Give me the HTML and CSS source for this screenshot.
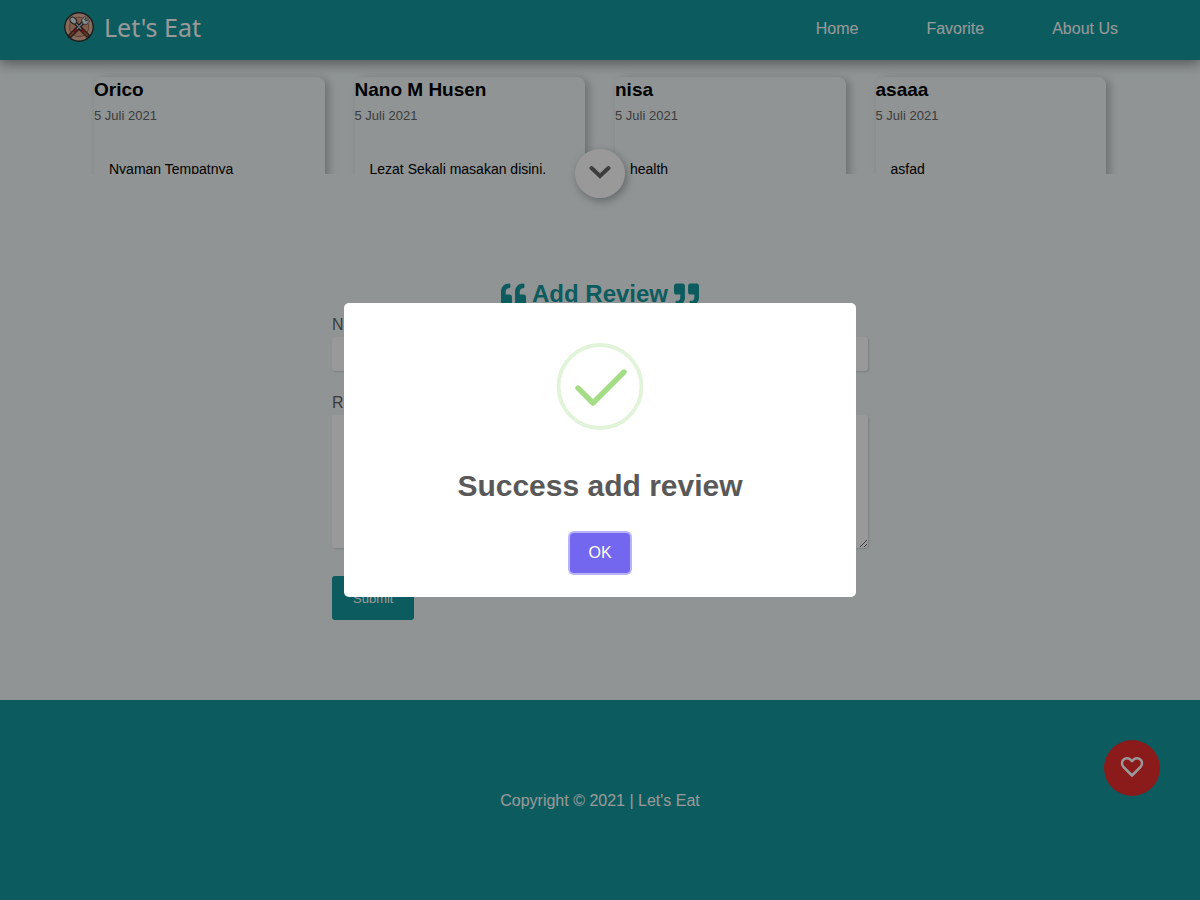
FILE: index.html
```html
<!DOCTYPE html>
<html lang="en">
<head>
<meta charset="utf-8">
<meta name="viewport" content="width=device-width, initial-scale=1">
<title>Let's Eat</title>
<link rel="stylesheet" href="styles.css">
</head>
<body>
<header class="header">
  <a class="brand" href="#">
    <svg class="brand-logo" viewBox="0 0 30 30" aria-hidden="true">
      <circle cx="15" cy="15" r="14.2" fill="#e2b49c" stroke="#33302f" stroke-width="1.4"/>
      <circle cx="15" cy="15" r="9.8" fill="#d99a7c" stroke="#9b6d5c" stroke-width="1"/>
      <g stroke-linecap="round" fill="none">
        <path d="M10 9.500 17 17M20 9.500 13 17" stroke="#33302f" stroke-width="3.800"/>
        <path d="M17 17 24 24M13 17 6 24" stroke="#33302f" stroke-width="4.400"/>
        <path d="M10 9.500 17 17M20 9.500 13 17" stroke="#aebdc4" stroke-width="1.200"/>
        <path d="M18 18 23.500 23.500M12 18 6.500 23.500" stroke="#a85a35" stroke-width="2.200"/>
        <path d="M18 18 19.500 19.500M12 18 10.500 19.500" stroke="#b51f2b" stroke-width="2.200"/>
      </g>
      <ellipse cx="9.300" cy="8.500" rx="2.800" ry="3.700" transform="rotate(-42 9.300 8.500)" fill="#dce8ed" stroke="#33302f"/>
      <path d="M17.500 8 20.500 4.500 22 5.500 20.500 8 23 5.500 24 6.500 21.500 9 24.500 8 25.500 9 22.500 12.500 19 12Z" fill="#dce8ed" stroke="#33302f" stroke-width=".7"/>
    </svg>
    <span>Let's Eat</span>
  </a>
  <nav class="nav">
    <a href="#">Home</a>
    <a href="#">Favorite</a>
    <a href="#">About Us</a>
  </nav>
</header>

<main class="main">
  <section class="reviews-wrap">
    <div class="reviews">
      <article class="review"><h3>Orico</h3><p class="date">5 Juli 2021</p><p class="comment">Nyaman Tempatnya</p></article>
      <article class="review"><h3>Nano M Husen</h3><p class="date">5 Juli 2021</p><p class="comment">Lezat Sekali masakan disini.</p></article>
      <article class="review"><h3>nisa</h3><p class="date">5 Juli 2021</p><p class="comment">health</p></article>
      <article class="review"><h3>asaaa</h3><p class="date">5 Juli 2021</p><p class="comment">asfad</p></article>
    </div>
    <button class="more" type="button" aria-label="Show more reviews">
      <svg viewBox="0 0 22 14" aria-hidden="true"><path d="M2.500 3 11 11 19.500 3" fill="none" stroke="#666" stroke-width="4" stroke-linecap="round" stroke-linejoin="miter"/></svg>
    </button>
  </section>

  <section class="add-review">
    <h2 class="form-title">
      <svg class="quote" viewBox="0 0 512 512" aria-hidden="true"><path d="M464 256h-80v-64c0-35.300 28.700-64 64-64h8c13.300 0 24-10.700 24-24V56c0-13.300-10.700-24-24-24h-8c-88.400 0-160 71.600-160 160v240c0 26.500 21.500 48 48 48h128c26.500 0 48-21.500 48-48V304c0-26.500-21.500-48-48-48zm-288 0H96v-64c0-35.300 28.700-64 64-64h8c13.300 0 24-10.700 24-24V56c0-13.300-10.700-24-24-24h-8C71.600 32 0 103.600 0 192v240c0 26.500 21.500 48 48 48h128c26.500 0 48-21.500 48-48V304c0-26.500-21.500-48-48-48z"/></svg>
      <span>Add Review</span>
      <svg class="quote" viewBox="0 0 512 512" aria-hidden="true"><path d="M464 32H336c-26.500 0-48 21.500-48 48v128c0 26.500 21.500 48 48 48h80v64c0 35.300-28.700 64-64 64h-8c-13.300 0-24 10.700-24 24v48c0 13.300 10.700 24 24 24h8c88.400 0 160-71.600 160-160V80c0-26.500-21.500-48-48-48zm-288 0H48C21.500 32 0 53.500 0 80v128c0 26.500 21.500 48 48 48h80v64c0 35.300-28.700 64-64 64h-8c-13.300 0-24 10.700-24 24v48c0 13.300 10.700 24 24 24h8c88.400 0 160-71.600 160-160V80c0-26.500-21.500-48-48-48z"/></svg>
    </h2>
    <form class="form">
      <label for="name">Name</label>
      <input id="name" type="text">
      <label for="review">Review</label>
      <textarea id="review"></textarea>
      <button class="submit" type="button">Submit</button>
    </form>
  </section>
</main>

<footer class="footer"><p>Copyright © 2021 | Let's Eat</p></footer>

<button class="like" type="button" aria-label="Like this restaurant">
  <svg viewBox="0 0 24 22" aria-hidden="true"><path d="M12 19.500 3.900 11.300C1.600 8.900 1.500 5.700 3.300 3.800 5.500 1.600 8.800 1.900 10.700 3.900L12 5.200 13.300 3.900C15.200 1.900 18.500 1.600 20.700 3.800 22.500 5.700 22.400 8.900 20.100 11.300Z" fill="none" stroke="#fff" stroke-width="2.600" stroke-linejoin="round"/></svg>
</button>

<div class="overlay">
  <div class="modal" role="dialog" aria-modal="true" aria-labelledby="modal-title">
    <svg class="success" viewBox="0 0 88 88" aria-hidden="true">
      <circle cx="44" cy="44.500" r="41.500" fill="none" stroke="#e1f3d8" stroke-width="3.800"/>
      <path d="M21.500 48 37 61 68 30.500" fill="none" stroke="none"/>
      <path d="M22 46 37 61 68 30" fill="none" stroke="#a5dc86" stroke-width="5.400" stroke-linecap="round" stroke-linejoin="round"/>
    </svg>
    <h2 id="modal-title">Success add review</h2>
    <button class="ok" type="button">OK</button>
  </div>
</div>
</body>
</html>
```
FILE: styles.css
```css
* {
  box-sizing: border-box;
}

body {
  margin: 0;
  min-height: 100vh;
  display: flex;
  flex-direction: column;
  background: #f0f7f7;
  color: #000;
  font: 16px/20px "Liberation Sans", Arial, sans-serif;
}

h2, h3, p {
  margin: 0;
}

button, input, textarea {
  font-family: inherit;
}

a {
  color: #fff;
  text-decoration: none;
}

.header {
  position: sticky;
  top: 0;
  z-index: 2;
  height: 60px;
  padding: 0 82px 6px 64px;
  display: flex;
  align-items: center;
  justify-content: space-between;
  background: #14999e;
  box-shadow: 0 4px 12px rgba(0, 0, 0, .4);
}

.brand {
  display: flex;
  align-items: center;
  gap: 10px;
  font: 25px/30px "Noto Sans", sans-serif;
}

.brand-logo {
  width: 30px;
  height: 30px;
}

.nav {
  padding-top: 4px;
  display: flex;
  gap: 68px;
}

.main {
  flex: 1;
}

.reviews-wrap {
  position: relative;
  width: calc(100% - 158px);
  margin: 0 auto;
}

.reviews {
  height: 114px;
  padding: 17px 15px 0;
  overflow: hidden;
  display: grid;
  grid-template-columns: repeat(4, 1fr);
  gap: 30px;
}

.review {
  height: 160px;
  border-radius: 8px;
  box-shadow: 4px 2px 8px rgba(0, 0, 0, .24);
  background: #f0f7f7;
}

.review h3 {
  padding-top: 1px;
  font-size: 19px;
  line-height: 24px;
}

.date {
  margin-top: 4px;
  color: #666;
  font-size: 13px;
}

.comment {
  padding: 33px 15px 0;
  font-size: 14px;
}

.more {
  position: absolute;
  left: 50%;
  bottom: -24px;
  width: 50px;
  height: 49px;
  margin-left: -25px;
  padding: 0 0 4px;
  display: flex;
  align-items: center;
  justify-content: center;
  border: 0;
  border-radius: 50%;
  background: #fff;
  box-shadow: 2px 3px 9px rgba(0, 0, 0, .3);
}

.more svg {
  width: 22px;
}

.add-review {
  width: 45%;
  min-width: 300px;
  margin: 0 auto;
  padding: 106px 2px 80px;
}

.form-title {
  display: flex;
  align-items: center;
  justify-content: center;
  gap: 6px;
  color: #14999e;
  font-size: 24px;
  line-height: 28px;
}

.quote {
  width: 25px;
  height: 25px;
  fill: currentColor;
}

.form {
  padding-top: 7px;
  display: flex;
  flex-direction: column;
  color: #666;
}

.form input, .form textarea {
  width: 100%;
  margin: 2px 0 22px;
  padding: 8px;
  border: 0;
  border-radius: 3px;
  background: #fff;
  box-shadow: 1px 1px 2px rgba(0, 0, 0, .14);
}

.form input {
  height: 34px;
}

.form textarea {
  height: 133px;
  margin: 2px 0 28px;
  resize: vertical;
}

.submit {
  align-self: flex-start;
  height: 44px;
  padding: 0 21px;
  border: 0;
  border-radius: 3px;
  background: #14999e;
  color: #fff;
  font-size: 13px;
}

.footer {
  min-height: 200px;
  padding-top: 2px;
  display: flex;
  align-items: center;
  justify-content: center;
  background: #14999e;
  color: #fff;
}

.like {
  position: fixed;
  right: 40px;
  bottom: 104px;
  width: 56px;
  height: 56px;
  padding: 0 0 2px;
  display: flex;
  align-items: center;
  justify-content: center;
  border: 0;
  border-radius: 50%;
  background: #e82d2d;
}

.like svg {
  width: 24px;
}

.overlay {
  position: fixed;
  inset: 0;
  z-index: 5;
  display: flex;
  align-items: center;
  justify-content: center;
  background: rgba(0, 0, 0, .4);
}

.modal {
  width: 512px;
  max-width: 90%;
  padding: 39px 20px 24px;
  display: flex;
  flex-direction: column;
  align-items: center;
  border-radius: 5px;
  background: #fff;
}

.success {
  width: 88px;
  height: 88px;
}

.modal h2 {
  padding: 38px 0 29px;
  color: #595959;
  font-size: 30px;
  line-height: 36px;
  text-align: center;
}

.ok {
  height: 40px;
  padding: 0 18px;
  border: 0;
  border-radius: 4px;
  background: #7367f0;
  box-shadow: 0 0 0 2px #b9b3f8;
  color: #fff;
  font-size: 16px;
}
```
